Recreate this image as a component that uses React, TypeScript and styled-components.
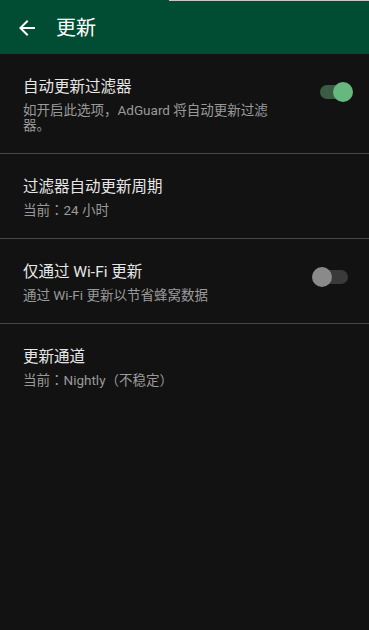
import styled, { createGlobalStyle } from "styled-components";

const GlobalStyle = createGlobalStyle`
  html, body {
    margin: 0;
    padding: 0;
    background: #121212;
  }
  body {
    font-family: "Roboto", "Noto Sans CJK JP", "Noto Sans CJK SC", sans-serif;
    -webkit-font-smoothing: antialiased;
  }
`;

type Setting = {
  title: string;
  summary: string;
  toggle?: boolean;
  checked?: boolean;
};

const settings: Setting[] = [
  {
    title: "自动更新过滤器",
    summary: "如开启此选项，AdGuard 将自动更新过滤器。",
    toggle: true,
    checked: true,
  },
  { title: "过滤器自动更新周期", summary: "当前：24 小时" },
  {
    title: "仅通过 Wi-Fi 更新",
    summary: "通过 Wi-Fi 更新以节省蜂窝数据",
    toggle: true,
    checked: false,
  },
  { title: "更新通道", summary: "当前：Nightly（不稳定）" },
];

export default function App() {
  return (
    <>
      <GlobalStyle />
      <Screen>
        <Toolbar>
          <BackButton aria-label="back">
            <svg width="24" height="24" viewBox="0 0 24 24">
              <path
                d="M20 11H7.83l5.59-5.59L12 4l-8 8 8 8 1.41-1.41L7.83 13H20v-2z"
                fill="#fff"
              />
            </svg>
          </BackButton>
          <ToolbarTitle>更新</ToolbarTitle>
        </Toolbar>

        <List>
          {settings.map((s) => (
            <Row key={s.title}>
              <TextCol>
                <Title>{s.title}</Title>
                <Summary>{s.summary}</Summary>
              </TextCol>
              {s.toggle && (
                <SwitchBox>
                  <Track $on={!!s.checked}>
                    <Thumb $on={!!s.checked} />
                  </Track>
                </SwitchBox>
              )}
            </Row>
          ))}
        </List>
      </Screen>
    </>
  );
}

const Screen = styled.div`
  width: 369px;
  min-height: 630px;
  background: #121212;
`;

const Toolbar = styled.header`
  position: relative;
  height: 54px;
  background: #004d33;
  display: flex;
  align-items: center;
  padding: 0 0 0 15px;
  gap: 17px;

  &::before {
    content: "";
    position: absolute;
    top: 0;
    left: 169px;
    right: 0;
    height: 1px;
    background: #c8c8c8;
  }
`;

const BackButton = styled.div`
  width: 24px;
  height: 24px;
  display: flex;
  margin-top: 2px;
`;

const ToolbarTitle = styled.h1`
  margin: 0;
  font-size: 20px;
  font-weight: 400;
  color: #ffffff;
  line-height: 26px;
  margin-top: 1px;
`;

const List = styled.div`
  display: flex;
  flex-direction: column;
`;

const Row = styled.div`
  display: flex;
  justify-content: space-between;
  align-items: flex-start;
  padding: 23px 13px 20px 23px;
  border-bottom: 1px solid #474747;

  &:last-child {
    border-bottom: none;
  }
`;

const TextCol = styled.div`
  display: flex;
  flex-direction: column;
  max-width: 252px;
`;

const Title = styled.div`
  font-size: 15.5px;
  line-height: 21px;
  color: #e6e6e6;
`;

const Summary = styled.div`
  margin-top: 5px;
  font-size: 13.5px;
  line-height: 15px;
  color: #9a9a9a;
`;

const SwitchBox = styled.div`
  width: 44px;
  height: 30px;
  display: flex;
  align-items: center;
  justify-content: center;
`;

const Track = styled.div<{ $on: boolean }>`
  position: relative;
  width: 28px;
  height: 14px;
  border-radius: 7px;
  background: ${(p) => (p.$on ? "#3a5c44" : "#3a3a3a")};
`;

const Thumb = styled.div<{ $on: boolean }>`
  position: absolute;
  top: -3px;
  left: ${(p) => (p.$on ? "13px" : "-8px")};
  width: 20px;
  height: 20px;
  border-radius: 50%;
  background: ${(p) => (p.$on ? "#66b87f" : "#8a8a8a")};
`;
